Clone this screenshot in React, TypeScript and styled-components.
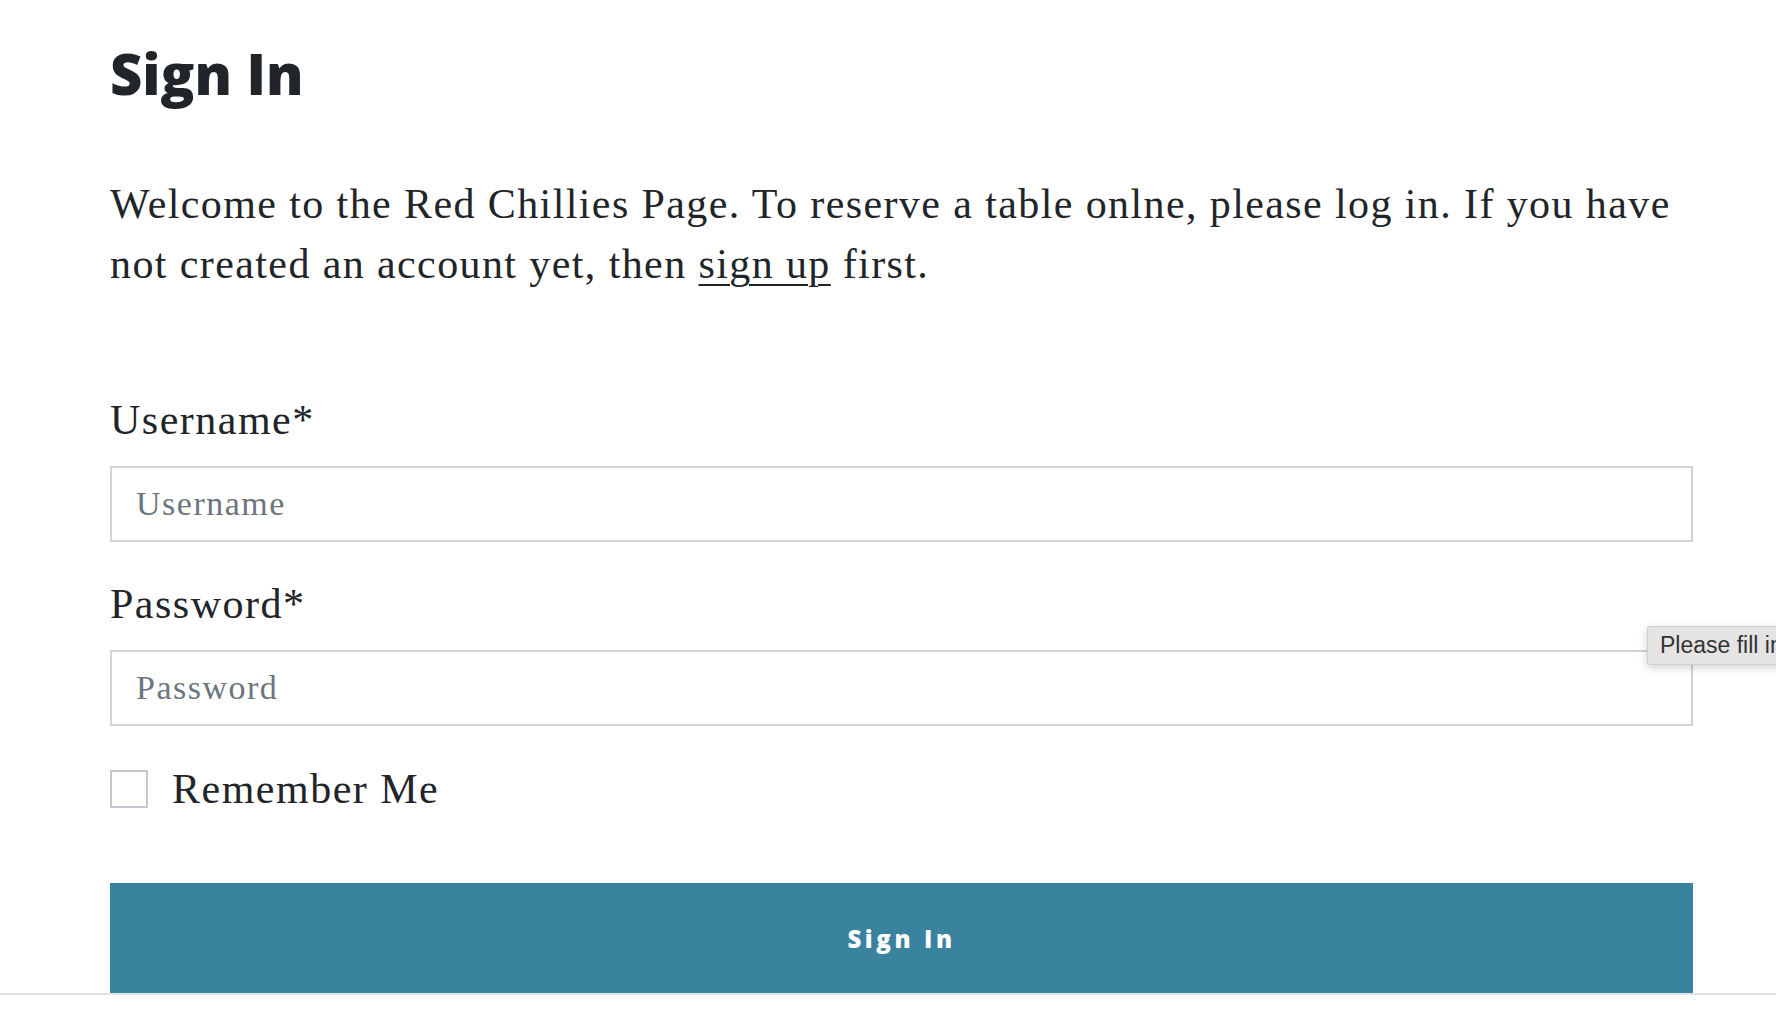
import styled, { createGlobalStyle } from 'styled-components';

const GlobalStyle = createGlobalStyle`
  html,
  body {
    margin: 0;
    padding: 0;
    background: #ffffff;
    overflow: hidden;
  }

  body {
    font-family: 'Liberation Serif', 'DejaVu Serif', serif;
    color: #212529;
  }

  * {
    box-sizing: border-box;
  }
`;

const Page = styled.div`
  width: 1776px;
  height: 1028px;
  display: flex;
  flex-direction: column;
  overflow: hidden;
`;

const Main = styled.main`
  width: 1693px;
  padding: 40px 0 0 110px;
`;

const Title = styled.h1`
  margin: 0;
  font-family: 'Open Sans', 'Noto Sans', sans-serif;
  font-weight: 800;
  font-size: 56px;
  line-height: 1.2;
  color: #212529;
`;

const Intro = styled.p`
  margin: 67px 0 0;
  font-size: 42px;
  line-height: 60px;
  letter-spacing: 1.4px;
  white-space: nowrap;
  color: #212529;

  a {
    color: inherit;
    text-decoration: underline;
    text-underline-offset: 6px;
    text-decoration-thickness: 2px;
  }
`;

const Form = styled.form`
  display: flex;
  flex-direction: column;
  margin-top: 96px;
`;

const Field = styled.div<{ $gap?: number }>`
  position: relative;
  display: flex;
  flex-direction: column;
  gap: 16px;
  margin-top: ${props => props.$gap ?? 0}px;
`;

const Label = styled.label`
  font-size: 42px;
  line-height: 60px;
  letter-spacing: 1.5px;
  color: #212529;
`;

const Input = styled.input`
  width: 100%;
  height: 76px;
  padding: 0 24px;
  border: 2px solid #ced4da;
  border-radius: 0;
  font-family: 'Liberation Serif', 'DejaVu Serif', serif;
  font-size: 34px;
  letter-spacing: 1.5px;
  color: #212529;
  background: #ffffff;
  outline: none;

  &::placeholder {
    color: #6c757d;
  }
`;

const Tooltip = styled.div`
  position: absolute;
  left: 1537px;
  top: 52px;
  height: 39px;
  padding: 0 12px;
  display: flex;
  align-items: center;
  white-space: nowrap;
  background: #e4e4e4;
  border: 1px solid #cfcfcf;
  border-radius: 2px;
  box-shadow: 0 3px 10px rgba(0, 0, 0, 0.18);
  font-family: 'Liberation Sans', Arial, sans-serif;
  font-size: 23px;
  color: #333333;
`;

const CheckRow = styled.label`
  display: flex;
  align-items: center;
  gap: 24px;
  margin-top: 43px;
  font-size: 42px;
  line-height: 40px;
  letter-spacing: 1.5px;
  color: #212529;
`;

const Check = styled.input`
  appearance: none;
  margin: 0;
  width: 38px;
  height: 38px;
  border: 2px solid #c4c8cc;
  background: #ffffff;
`;

const SubmitButton = styled.button`
  margin-top: 74px;
  width: 100%;
  height: 110px;
  border: none;
  background: #3a839f;
  color: #ffffff;
  font-family: 'Open Sans', 'Noto Sans', sans-serif;
  font-weight: 800;
  font-size: 24px;
  letter-spacing: 3.6px;
  cursor: pointer;
`;

const Footer = styled.footer`
  border-top: 2px solid #e1e3e6;
  flex: 1;
`;

const App = () => {
  return (
    <Page>
      <GlobalStyle />
      <Main>
        <Title>Sign In</Title>
        <Intro>
          Welcome to the Red Chillies Page. To reserve a table onlne, please log in. If you have
          <br />
          not created an account yet, then <a href="#signup">sign up</a> first.
        </Intro>
        <Form onSubmit={e => e.preventDefault()}>
          <Field>
            <Label htmlFor="username">Username*</Label>
            <Input id="username" type="text" placeholder="Username" />
          </Field>
          <Field $gap={32}>
            <Label htmlFor="password">Password*</Label>
            <Input id="password" type="password" placeholder="Password" />
            <Tooltip>Please fill in this field.</Tooltip>
          </Field>
          <CheckRow>
            <Check type="checkbox" />
            Remember Me
          </CheckRow>
          <SubmitButton type="submit">Sign In</SubmitButton>
        </Form>
      </Main>
      <Footer />
    </Page>
  );
};

export default App;
